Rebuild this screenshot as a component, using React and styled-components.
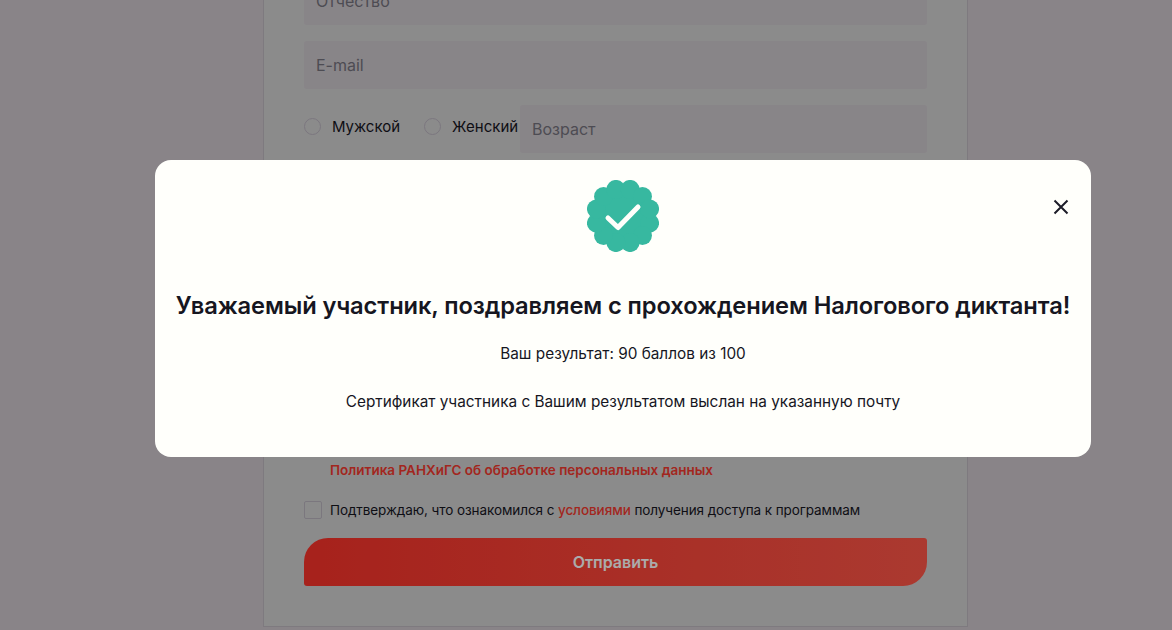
import React from 'react';
import styled, { createGlobalStyle } from 'styled-components';

const GlobalStyle = createGlobalStyle`
    html, body {
        margin: 0;
        height: 100%;
        overflow: hidden;
        background-color: #ccc5cb;
        font-family: "Inter", "Noto Sans", sans-serif;
    }
`;

const Page = styled.div`
    display: flex;
    height: 630px;
    padding-left: 263px;
    overflow: hidden;
`;

const FormCard = styled.form`
    box-sizing: border-box;
    width: 705px;
    height: 650px;
    margin-top: -23px;
    padding: 0 40px 40px;
    display: flex;
    flex-direction: column;
    background-color: #d0cfd0;
    border: 1px solid #bcb6be;
    border-top: 0;
`;

const Field = styled.input`
    box-sizing: border-box;
    display: block;
    width: 100%;
    height: 48px;
    margin-bottom: 16px;
    padding: 0 12px;
    border: 0;
    border-radius: 3px;
    outline: 0;
    background-color: #cbc6cb;
    font-family: inherit;
    font-size: 16px;
    color: #222;

    &::placeholder {
        color: #74727c;
        opacity: 1;
    }
`;

const GenderRow = styled.div`
    display: flex;
`;

const RadioGroup = styled.div`
    display: flex;
    flex: none;
    width: 216px;
    height: 42px;
`;

const RadioLabel = styled.label`
    display: flex;
    align-items: center;
    gap: 11px;
    height: 42px;
    margin-right: 24px;
    font-size: 15px;
    color: #16161f;
    white-space: nowrap;

    &:last-child {
        margin-right: 0;
    }
`;

const RadioMark = styled.span`
    box-sizing: border-box;
    width: 17px;
    height: 17px;
    border: 1px solid #b8b2bd;
    border-radius: 50%;
`;

const AgeField = styled(Field)`
    flex: 1;
    width: auto;
    margin: 0;
`;

const Hidden = styled.div`
    height: 307px;
`;

const Policy = styled.a`
    display: block;
    margin-left: 26px;
    font-size: 13.5px;
    line-height: 20px;
    font-weight: 600;
    color: #f23a2f;
`;

const ConsentRow = styled.label`
    display: flex;
    align-items: center;
    gap: 8px;
    height: 20px;
    margin-top: 20px;
    margin-bottom: 18px;
    font-size: 13.5px;
    letter-spacing: -0.08px;
    color: #16161f;
    white-space: nowrap;
`;

const CheckMark = styled.span`
    box-sizing: border-box;
    width: 18px;
    height: 18px;
    border: 1px solid #b8b2bd;
    border-radius: 2px;
`;

const Accent = styled.span`
    color: #f23a2f;
    font-weight: 500;
`;

const SubmitButton = styled.button`
    display: block;
    width: 100%;
    height: 48px;
    padding: 0;
    border: 0;
    border-radius: 24px 3px 24px 3px;
    background: linear-gradient(90deg, #f9332a, #ff5648);
    font-family: inherit;
    font-size: 16px;
    font-weight: 600;
    color: #fff;
`;

const Overlay = styled.div`
    position: fixed;
    inset: 0;
    box-sizing: border-box;
    padding: 160px 0 0 155px;
    background-color: rgba(0, 0, 0, 0.33);
`;

const Modal = styled.div`
    position: relative;
    box-sizing: border-box;
    width: 936px;
    height: 297px;
    padding-top: 20px;
    display: flex;
    flex-direction: column;
    align-items: center;
    background-color: #fffffb;
    border-radius: 16px;
    color: #16161f;
`;

const CloseButton = styled.button`
    position: absolute;
    top: 37px;
    right: 20px;
    width: 20px;
    height: 20px;
    padding: 0;
    border: 0;
    background: none;
    line-height: 0;
`;

const Title = styled.h2`
    margin: 38px 0 0;
    font-size: 23.7px;
    line-height: 32px;
    font-weight: 600;
    letter-spacing: -0.1px;
    white-space: nowrap;
`;

const Message = styled.p`
    margin: ${(props) => props.$top}px 0 0;
    font-size: 15.35px;
    line-height: 24px;
    font-weight: 400;
    white-space: nowrap;
`;

// scalloped badge: 12 lobes on a ring + middle fill
const lobes = Array.from({ length: 12 }, (_, i) => {
    const a = ((i * 30 + 15) * Math.PI) / 180;
    return { x: 36 + 27.5 * Math.cos(a), y: 36 + 27.5 * Math.sin(a) };
});

function Badge() {
    return (
        <svg width="72" height="72" viewBox="0 0 72 72" aria-hidden="true">
            <circle cx="36" cy="36" r="30" fill="#37b8a0" />
            {lobes.map((l, i) => (
                <circle key={i} cx={l.x} cy={l.y} r="9.5" fill="#37b8a0" />
            ))}
            <path
                d="M21 38 L31 47.5 L51 27"
                fill="none"
                stroke="#fffffb"
                strokeWidth="5"
                strokeLinecap="round"
                strokeLinejoin="round"
            />
        </svg>
    );
}

export default function App() {
    return (
        <>
            <GlobalStyle />
            <Page>
                <FormCard>
                    <Field placeholder="Отчество" readOnly />
                    <Field placeholder="E-mail" readOnly />
                    <GenderRow>
                        <RadioGroup>
                            <RadioLabel><RadioMark />Мужской</RadioLabel>
                            <RadioLabel><RadioMark />Женский</RadioLabel>
                        </RadioGroup>
                        <AgeField placeholder="Возраст" readOnly />
                    </GenderRow>
                    <Hidden />
                    <Policy>Политика РАНХиГС об обработке персональных данных</Policy>
                    <ConsentRow>
                        <CheckMark />
                        <span>Подтверждаю, что ознакомился с <Accent>условиями</Accent> получения доступа к программам</span>
                    </ConsentRow>
                    <SubmitButton type="button">Отправить</SubmitButton>
                </FormCard>
            </Page>
            <Overlay>
                <Modal>
                    <CloseButton type="button" aria-label="Закрыть">
                        <svg width="20" height="20" viewBox="0 0 20 20">
                            <path d="M3.5 3.5 L16.5 16.5 M16.5 3.5 L3.5 16.5" stroke="#1c1c28" strokeWidth="2" fill="none" />
                        </svg>
                    </CloseButton>
                    <Badge />
                    <Title>Уважаемый участник, поздравляем с прохождением Налогового диктанта!</Title>
                    <Message $top={20}>Ваш результат: 90 баллов из 100</Message>
                    <Message $top={24}>Сертификат участника с Вашим результатом выслан на указанную почту</Message>
                </Modal>
            </Overlay>
        </>
    );
}
